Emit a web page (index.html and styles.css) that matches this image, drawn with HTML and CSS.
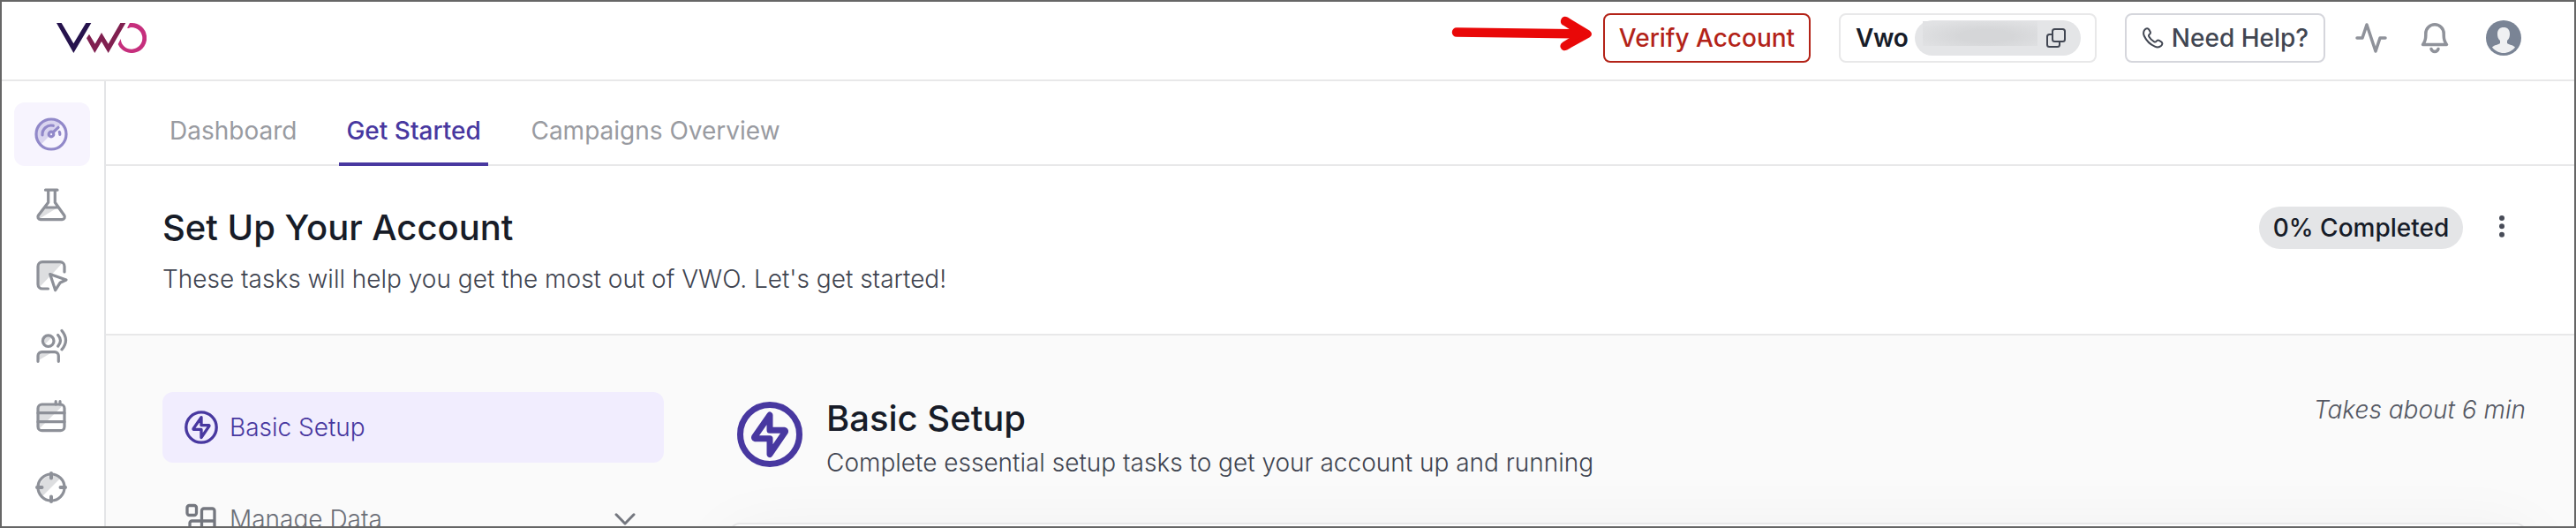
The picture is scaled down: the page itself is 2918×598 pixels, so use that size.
FILE: index.html
```html
<!DOCTYPE html>
<html lang="en">
<head>
<meta charset="utf-8">
<title>VWO</title>
<link rel="stylesheet" href="styles.css">
</head>
<body>
<header class="topbar">
  <svg class="logo" viewBox="192 78 306 102" role="img" aria-label="VWO">
    <path fill="#26134d" d="M192 78h17l41 70 42-70h18l-60 102z"/>
    <path fill="#802050" d="M294 130l9-14 20 33 22-38 23 38 41-71h18l-59 102-23-39-23 39z"/>
    <path fill="#c62f7d" d="M441 78h6a51 51 0 1 1-46 72l9-18a37 37 0 1 0 37-39q-6 0-10 3l-5-1z"/>
  </svg>
  <svg class="arrow" viewBox="0 0 164 40">
    <path d="M7 18.500L146 20.300" stroke-width="10.500"/>
    <path fill="#e90808" stroke-width="5" d="M127.500 5.200q1-3 4-1.500L156.500 19q2 1.500 0 3L131 36.200q-3 1.500-4-1.200q-.5-2 1.500-3.200L140 25V15.500L129 8.500q-2-1-1.500-3.300z"/>
  </svg>
  <button class="btn verify">Verify Account</button>
  <div class="btn account">
    <span class="account-name">Vwo</span>
    <span class="account-id">
      <span class="masked"></span>
      <svg class="copy" viewBox="0 0 24 24"><rect x="8" y="2" width="14" height="14" rx="2.500"/><path d="M8 8H4.500A2.500 2.500 0 0 0 2 10.500v9A2.500 2.500 0 0 0 4.500 22h9a2.500 2.500 0 0 0 2.500-2.500V16"/></svg>
    </span>
  </div>
  <button class="btn help">
    <svg class="phone" viewBox="0 0 24 24"><path d="M2.500 2.700C4 .9 6.300.7 7.300 2.400l1.300 2.300c.7 1.300.2 2.500-.9 3.300-1 .8-.8 1.700-.2 2.700 1.200 2.100 3.200 4.100 5.400 5.400 1 .6 2 .7 2.700-.3.800-1.100 2-1.600 3.200-.9l2.400 1.400c1.700 1 1.500 3.200-.3 4.800-2 1.700-4.200 1.900-7 .6C8.800 19.300 4.300 15 2 10 .7 7.200.9 4.600 2.500 2.700z"/></svg>
    <span>Need Help?</span>
  </button>
  <svg class="tool pulse" viewBox="0 0 36 36"><path d="M2 18h6l5-15 10 30 5-15h6"/></svg>
  <svg class="tool bell" viewBox="0 0 36 36"><path d="M4.500 25.500c2.500-3 3.300-5 3.300-10.500V13a10.200 10.200 0 0 1 20.400 0v2c0 5.500.8 7.500 3.300 10.500zM14 30.500a4.200 4.200 0 0 0 8 0"/></svg>
  <svg class="avatar" viewBox="0 0 40 40"><circle cx="20" cy="20" r="20" fill="#7a8495"/><path fill="#eff0f2" d="M20 8c-4.500 0-7 2.500-7 7.500 0 3 .8 5.500 3 7.500v3c-1.500 1.500-7 2-9 4.500C10 34.500 15 37 20 37s10-2.500 13-6.500c-2-2.500-7.500-3-9-4.500v-3c2.200-2 3-4.500 3-7.500C27 10.500 24.500 8 20 8z"/></svg>
</header>
<div class="shell">
  <nav class="rail">
    <a class="rail-item active"><svg viewBox="0 0 40 40"><path class="tint" d="M8 32A17 17 0 0 1 32 8z"/><circle cx="20" cy="20" r="17"/><circle cx="20" cy="20" r="2.800"/><path d="M22.500 17.500l5.500-5.200M10 20.800A10 10 0 0 1 22.300 10.300M29.300 17.500q.7 1.300.5 2.800"/></svg></a>
    <a class="rail-item"><svg viewBox="0 0 40 40"><path class="tint" d="M12 23h15.500L7 35.500l-2-2z"/><path d="M13.500 3.200h13.500M16.700 3.200v14L5.400 32a3 3 0 0 0 2.400 4.700h24.600a3 3 0 0 0 2.400-4.700L24.300 17.200v-14M12.500 23h15.500"/></svg></a>
    <a class="rail-item"><svg viewBox="0 0 40 40"><path class="tint" d="M5 35V10a5 5 0 0 1 5-5h23.500L21 18.500l-2.300-.2.500 2z"/><path d="M35 16V9.700a5 5 0 0 0-5-5H10a5 5 0 0 0-5 5V30a5 5 0 0 0 5 5h6.500M18.700 18.500L37 25l-7 3.300-5.300 8.400z"/></svg></a>
    <a class="rail-item"><svg viewBox="0 0 40 40"><path class="tint" d="M5 36.500V31a4 4 0 0 1 4-4h12zM12 19l9-9.500a6.300 6.300 0 0 0-9 9.500z"/><circle cx="16.700" cy="14.200" r="6.300"/><path d="M5 37.300V31a4.300 4.300 0 0 1 4.300-4.300H24a4.300 4.300 0 0 1 4.300 4.300v6.300M27.700 7.500q5.600 6.300 0 12.600M32 2.500q9 10.700 0 21.400"/></svg></a>
    <a class="rail-item"><svg viewBox="0 0 40 40"><path class="tint" d="M5 35V10a4 4 0 0 1 4-4h25.500z"/><rect x="5" y="6" width="30" height="29.700" rx="4.500"/><path d="M5 15.700h30M5 25.700h30M25.200 6V2.700M30 6V2.700"/></svg></a>
    <a class="rail-item"><svg viewBox="0 0 40 40"><path class="tint" d="M9.500 30.500A15 15 0 0 1 30.500 9.500z"/><circle cx="20" cy="20" r="15"/><path stroke-width="4" d="M20 4v5.500M20 30.500v5.500M4 20H9.500M30.500 20h5.500"/></svg></a>
  </nav>
  <main class="main">
    <nav class="tabs">
      <a class="tab">Dashboard</a>
      <a class="tab selected">Get Started</a>
      <a class="tab">Campaigns Overview</a>
    </nav>
    <section class="intro">
      <div class="intro-text">
        <h1 class="title">Set Up Your Account</h1>
        <p class="desc">These tasks will help you get the most out of VWO. Let's get started!</p>
      </div>
      <span class="progress">0% Completed</span>
      <svg class="kebab" viewBox="0 0 8 26"><circle cx="4" cy="4" r="3"/><circle cx="4" cy="13.300" r="3"/><circle cx="4" cy="22.700" r="3"/></svg>
    </section>
    <section class="content">
      <aside class="steps">
        <a class="step current"><svg class="step-icon" viewBox="0 0 74 74"><circle cx="37" cy="37" r="33.500"/><path d="M37 15v17.300h16.500q1.500.5.800 2L37 59.500V41.700H20.500q-1.500-.5-.8-2z"/></svg><span>Basic Setup</span></a>
        <a class="step"><svg class="step-icon" viewBox="0 0 38 38"><rect x="3" y="3.500" width="10.500" height="11" rx="2.500"/><path d="M19.500 21V9.500a2.500 2.500 0 0 1 2.500-2.500h9.500a2.500 2.500 0 0 1 2.500 2.500V32a2.500 2.500 0 0 1-2.500 2.500H8.500A2.500 2.500 0 0 1 6 32v-8.500A2.500 2.500 0 0 1 8.500 21H34M19.500 21v13.500"/></svg><span>Manage Data</span><svg class="chevron" viewBox="0 0 24 14"><path d="M2 1.800l10 10.200L22 1.800"/></svg></a>
      </aside>
      <div class="detail">
        <div class="detail-head">
          <svg class="detail-icon" viewBox="0 0 74 74"><circle cx="37" cy="37" r="33.500"/><path d="M37 15v17.300h16.500q1.500.5.800 2L37 59.500V41.700H20.500q-1.500-.5-.8-2z"/></svg>
          <div class="detail-text">
            <h2 class="title">Basic Setup</h2>
            <p class="desc">Complete essential setup tasks to get your account up and running</p>
          </div>
          <span class="duration">Takes about 6 min</span>
        </div>
        <div class="card"></div>
      </div>
    </section>
  </main>
</div>
</body>
</html>
```
FILE: styles.css
```css
* { box-sizing: border-box; }
html { overflow: hidden; }
body {
  margin: 0;
  height: 598px;
  border: 2px solid #666;
  overflow: hidden;
  display: flex;
  flex-direction: column;
  background: #fff;
  font: 300 28px/40px Inter, "Liberation Sans", sans-serif;
  color: #171c28;
}
svg { display: block; flex: none; fill: none; stroke-linecap: round; stroke-linejoin: round; }
h1, h2, p { margin: 0; }
.topbar {
  flex: none;
  height: 90px;
  display: flex;
  align-items: center;
  padding: 0 60px 6px 62px;
  border-bottom: 2px solid #e8e8e9;
}
.logo { width: 102px; height: 34px; }
.arrow { width: 164px; height: 40px; margin: 0 9px 10px auto; stroke: #e90808; }
.btn {
  height: 56px;
  flex: none;
  display: flex;
  align-items: center;
  justify-content: center;
  padding: 0;
  font: 500 28px/40px Inter, "Liberation Sans", sans-serif;
  white-space: nowrap;
  background: #fff;
  border: 2px solid #e8e8e9;
  border-radius: 8px;
}
.verify { width: 235px; color: #b32318; border-color: #b32318; }
.account { width: 292px; margin-left: 32px; padding-left: 17px; justify-content: flex-start; }
.account-name { width: 67px; font-weight: 600; letter-spacing: -.4px; }
.account-id {
  width: 188px;
  height: 40px;
  display: flex;
  align-items: center;
  justify-content: space-between;
  padding: 0 16px 0 9px;
  border-radius: 20px;
  background: #e4e5e7;
}
.masked {
  width: 130px;
  height: 28px;
  margin-bottom: 10px;
  background: radial-gradient(ellipse at 55% 60%, #d5d6d8 30%, #e1e2e4 85%);
}
.copy { width: 24px; height: 24px; stroke: #414652; stroke-width: 2; }
.help { width: 227px; margin-left: 32px; gap: 9px; padding-left: 1px; color: #414652; border-color: #d5d6dc; }
.phone { width: 24px; height: 24px; stroke: #414652; stroke-width: 2; }
.tool { width: 36px; height: 36px; stroke: #8f929a; stroke-width: 3.5; }
.pulse { margin-left: 34px; }
.bell { margin-left: 36px; }
.avatar { width: 40px; height: 40px; margin-left: 40px; }

.shell { flex: 1; min-height: 0; display: flex; }
.rail {
  width: 118px;
  flex: none;
  display: flex;
  flex-direction: column;
  gap: 8px;
  padding: 24px 14px 0;
  border-right: 2px solid #e4e5e7;
}
.rail-item {
  width: 86px;
  height: 72px;
  flex: none;
  display: flex;
  align-items: center;
  justify-content: center;
  padding-right: 2px;
  border-radius: 12px;
}
.rail-item svg { width: 40px; height: 40px; stroke: #8d9098; stroke-width: 3.2; }
.rail-item .tint { fill: #dddee0; stroke: none; }
.active { background: #f7f4fe; }
.rail-item.active svg { stroke: #9188c9; }
.active .tint { fill: #d9d4ef; }

.main { flex: 1; min-width: 0; display: flex; flex-direction: column; }
.tabs {
  flex: none;
  height: 96px;
  display: flex;
  align-items: flex-end;
  gap: 38px;
  padding-left: 62px;
  border-bottom: 2px solid #e8e8e9;
}
.tab {
  height: 60px;
  margin-bottom: -2px;
  padding: 0 10px;
  font-weight: 400;
  color: #999ba1;
  white-space: nowrap;
  border-bottom: 4px solid transparent;
}
.tab.selected { width: 169px; padding: 0 8px; font-weight: 500; color: #4838a0; border-color: #4838a0; }
.intro {
  flex: none;
  height: 192px;
  display: flex;
  align-items: flex-start;
  padding: 46px 78px 0 64px;
  border-bottom: 2px solid #e8e8e9;
}
.intro-text { flex: 1; }
.title { font-size: 40px; line-height: 48px; font-weight: 500; }
.desc { color: #404450; }
.intro .desc { margin-top: 14px; }
.progress {
  width: 231px;
  height: 48px;
  border-radius: 24px;
  background: #e4e5e7;
  font-weight: 500;
  line-height: 48px;
  text-align: center;
  white-space: nowrap;
}
.kebab { width: 8px; height: 26px; margin: 9px 0 0 40px; fill: #484c58; }
.content {
  flex: 1;
  min-height: 0;
  display: flex;
  align-items: flex-start;
  padding: 64px 54px 0 64px;
  background: #fafafa;
  overflow: hidden;
}
.steps { width: 568px; flex: none; display: flex; flex-direction: column; gap: 24px; }
.step {
  height: 80px;
  display: flex;
  align-items: center;
  gap: 13px;
  padding: 0 32px 0 25px;
  border-radius: 12px;
  color: #6c6f78;
}
.step-icon { width: 38px; height: 38px; stroke: #74777f; stroke-width: 3.3; }
.current { background: #f1edfe; color: #4838a0; }
.current .step-icon { stroke: #4838a0; stroke-width: 6.5; }
.chevron { width: 24px; height: 14px; margin-left: auto; stroke: #74777f; stroke-width: 3; }
.detail { flex: 1; margin-left: 74px; }
.detail-head { height: 148px; display: flex; align-items: flex-start; padding: 0 1px 0 9px; }
.detail-icon { width: 74px; height: 74px; margin-top: 11px; stroke: #4838a0; stroke-width: 7; }
.detail-text { flex: 1; margin: 6px 0 0 27px; }
.detail-text .desc { margin-top: 6px; }
.duration { font-style: italic; color: #545863; white-space: nowrap; }
.card {
  height: 300px;
  border: 2px solid #e8e8e9;
  border-radius: 12px;
  background: #fff;
  box-shadow: 0 16px 80px rgba(0, 0, 0, .06);
}
```
